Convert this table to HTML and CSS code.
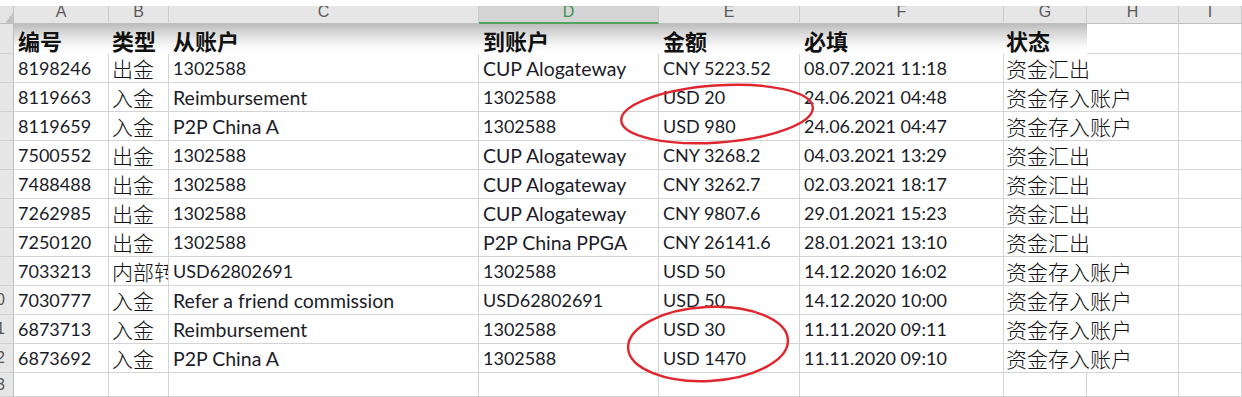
FILE: index.html
```html
<!DOCTYPE html>
<html lang="zh">
<head>
<meta charset="utf-8">
<title>Sheet</title>
<link rel="stylesheet" href="styles.css">
</head>
<body>
<div class="sheet">
  <div class="corner"></div>
  <div class="ch">A</div><div class="ch">B</div><div class="ch">C</div><div class="ch sel">D</div><div class="ch">E</div><div class="ch">F</div><div class="ch">G</div><div class="ch">H</div><div class="ch">I</div>

  <div class="rh"></div>
  <div class="hd">编号</div><div class="hd zb">类型</div><div class="hd">从账户</div><div class="hd">到账户</div><div class="hd">金额</div><div class="hd">必填</div><div class="hd zg">状态</div><div class="c"></div><div class="c"></div>

  <div class="rh"></div>
  <div class="c">8198246</div><div class="c zh zb">出金</div><div class="c">1302588</div><div class="c w">CUP Alogateway</div><div class="c">CNY 5223.52</div><div class="c">08.07.2021 11:18</div><div class="c zh zg">资金汇出</div><div class="c"></div><div class="c"></div>

  <div class="rh"></div>
  <div class="c">8119663</div><div class="c zh zb">入金</div><div class="c w">Reimbursement</div><div class="c">1302588</div><div class="c">USD 20</div><div class="c">24.06.2021 04:48</div><div class="c zh zg">资金存入账户</div><div class="c"></div><div class="c"></div>

  <div class="rh"></div>
  <div class="c">8119659</div><div class="c zh zb">入金</div><div class="c w">P2P China A</div><div class="c">1302588</div><div class="c">USD 980</div><div class="c">24.06.2021 04:47</div><div class="c zh zg">资金存入账户</div><div class="c"></div><div class="c"></div>

  <div class="rh"></div>
  <div class="c">7500552</div><div class="c zh zb">出金</div><div class="c">1302588</div><div class="c w">CUP Alogateway</div><div class="c">CNY 3268.2</div><div class="c">04.03.2021 13:29</div><div class="c zh zg">资金汇出</div><div class="c"></div><div class="c"></div>

  <div class="rh"></div>
  <div class="c">7488488</div><div class="c zh zb">出金</div><div class="c">1302588</div><div class="c w">CUP Alogateway</div><div class="c">CNY 3262.7</div><div class="c">02.03.2021 18:17</div><div class="c zh zg">资金汇出</div><div class="c"></div><div class="c"></div>

  <div class="rh"></div>
  <div class="c">7262985</div><div class="c zh zb">出金</div><div class="c">1302588</div><div class="c w">CUP Alogateway</div><div class="c">CNY 9807.6</div><div class="c">29.01.2021 15:23</div><div class="c zh zg">资金汇出</div><div class="c"></div><div class="c"></div>

  <div class="rh"></div>
  <div class="c">7250120</div><div class="c zh zb">出金</div><div class="c">1302588</div><div class="c w">P2P China PPGA</div><div class="c">CNY 26141.6</div><div class="c">28.01.2021 13:10</div><div class="c zh zg">资金汇出</div><div class="c"></div><div class="c"></div>

  <div class="rh"></div>
  <div class="c">7033213</div><div class="c zh zb clip">内部转账</div><div class="c">USD62802691</div><div class="c">1302588</div><div class="c">USD 50</div><div class="c">14.12.2020 16:02</div><div class="c zh zg">资金存入账户</div><div class="c"></div><div class="c"></div>

  <div class="rh">10</div>
  <div class="c">7030777</div><div class="c zh zb">入金</div><div class="c w">Refer a friend commission</div><div class="c">USD62802691</div><div class="c">USD 50</div><div class="c">14.12.2020 10:00</div><div class="c zh zg">资金存入账户</div><div class="c"></div><div class="c"></div>

  <div class="rh">11</div>
  <div class="c">6873713</div><div class="c zh zb">入金</div><div class="c w">Reimbursement</div><div class="c">1302588</div><div class="c">USD 30</div><div class="c">11.11.2020 09:11</div><div class="c zh zg">资金存入账户</div><div class="c"></div><div class="c"></div>

  <div class="rh">12</div>
  <div class="c">6873692</div><div class="c zh zb">入金</div><div class="c w">P2P China A</div><div class="c">1302588</div><div class="c">USD 1470</div><div class="c">11.11.2020 09:10</div><div class="c zh zg">资金存入账户</div><div class="c"></div><div class="c"></div>

  <div class="rh">13</div>
  <div class="c"></div><div class="c"></div><div class="c"></div><div class="c"></div><div class="c"></div><div class="c"></div><div class="c"></div><div class="c"></div><div class="c"></div>
</div>
<svg class="marks" width="1242" height="397" viewBox="0 0 1242 397">
  <ellipse cx="717" cy="114" rx="96" ry="28.5" transform="rotate(-4 717 114)" />
  <ellipse cx="708" cy="344" rx="80" ry="37" transform="rotate(-3 708 344)" />
</svg>
</body>
</html>
```
FILE: styles.css
```css
html, body {
  margin: 0;
  padding: 0;
}
body {
  width: 1242px;
  height: 397px;
  overflow: hidden;
  background: #fff;
  position: relative;
  font-family: Lato, "Noto Sans CJK SC", sans-serif;
}
.sheet {
  display: grid;
  grid-template-columns: 14px 95px 60px 310px 180px 141px 204px 83px 92px 63px;
  grid-template-rows: 18px 30px repeat(11, 29px) 24px;
  margin-top: 6px;
}
.corner {
  background: linear-gradient(to top left, #c2c2c2 0 30%, #e4e4e4 30%);
  border-right: 1px solid #c4c4c4;
  border-bottom: 1px solid #bcbcbc;
  box-sizing: border-box;
}
.ch {
  box-sizing: border-box;
  background: #e6e6e6;
  border-right: 1px solid #cbcbcb;
  border-bottom: 1px solid #bdbdbd;
  display: flex;
  justify-content: center;
  align-items: flex-start;
  overflow: hidden;
  font-family: "Liberation Sans", sans-serif;
  font-size: 16px;
  line-height: 11px;
  color: #5a5a5a;
}
.ch.sel {
  background: #d4d4d4;
  color: #3f8f4f;
  border-bottom: 2px solid #52a35e;
}
.rh {
  box-sizing: border-box;
  background: #e6e6e6;
  border-right: 1px solid #bdbdbd;
  border-bottom: 1px solid #d2d2d2;
  display: flex;
  align-items: center;
  justify-content: flex-end;
  padding-right: 8px;
  overflow: hidden;
  font-family: "Liberation Sans", sans-serif;
  font-size: 16px;
  color: #555;
}
.hd {
  box-sizing: border-box;
  background: linear-gradient(to bottom, #bdbdbd 0%, #dcdcdc 35%, #f6f6f6 70%, #fff 90%);
  display: flex;
  align-items: flex-end;
  padding: 0 0 1px 4px;
  font-family: "Noto Sans CJK SC", sans-serif;
  font-weight: 700;
  font-size: 22px;
  line-height: 26px;
  color: #111;
  white-space: nowrap;
}
.c {
  box-sizing: border-box;
  border-right: 1px solid #d4d4d4;
  border-bottom: 1px solid #d4d4d4;
  display: flex;
  align-items: center;
  padding-left: 4px;
  white-space: nowrap;
  font-size: 18px;
  color: #1c1c28;
}
.w {
  font-size: 19.5px;
}
.zh {
  font-family: "Noto Sans CJK SC", sans-serif;
  font-weight: 300;
  font-size: 21px;
  color: #111;
}
.zb {
  padding-left: 3px;
}
.zg {
  padding-left: 2px;
  border-right: none;
}
.clip {
  overflow: hidden;
}
.marks {
  position: absolute;
  left: 0;
  top: 0;
  pointer-events: none;
}
.marks ellipse {
  fill: none;
  stroke: #e0262e;
  stroke-width: 2.4;
}
```
